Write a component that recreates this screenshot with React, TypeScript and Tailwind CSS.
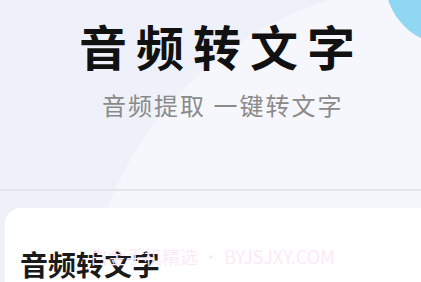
const cjk = { fontFamily: '"Noto Sans CJK SC", "Noto Sans", sans-serif' };

const App = () => {
  return (
    <main
      className="relative w-[421px] h-[282px] overflow-hidden bg-[#eef1f9]"
      style={cjk}
    >
      {/* background shapes */}
      <div className="absolute left-[84px] top-[-16px] w-[700px] h-[700px] rounded-full bg-[#f6f7fc]" />
      <div className="absolute left-[385px] top-[-85px] w-[130px] h-[130px] rounded-full bg-[#8fd7f2]" />

      <div className="relative flex flex-col">
        {/* Hero */}
        <section className="h-[189px] pl-[79px] pt-[21px]">
          <h1 className="text-[48px] leading-none font-semibold tracking-[9px] text-[#111111]">
            音频转文字
          </h1>
          <p className="mt-[24px] pl-[23px] text-[24px] leading-none tracking-[2px] text-[#8a8a8a]">
            音频提取 一键转文字
          </p>
        </section>

        <div className="h-[2px] bg-[#e3e5ea]" />
        <div className="h-[17px]" />

        {/* Card */}
        <section className="ml-[5px] h-[120px] rounded-tl-[16px] bg-white pl-[15px] pt-[42px]">
          <div className="relative">
            <h2 className="text-[28px] leading-none font-bold text-[#1a1a1a]">
              音频转文字
            </h2>
            <span className="absolute left-[70px] top-[-3px] text-[18px] leading-none text-[#fdeaf5]">
              白金手机精选 · BYJSJXY.COM
            </span>
          </div>
        </section>
      </div>
    </main>
  );
};

export default App;
